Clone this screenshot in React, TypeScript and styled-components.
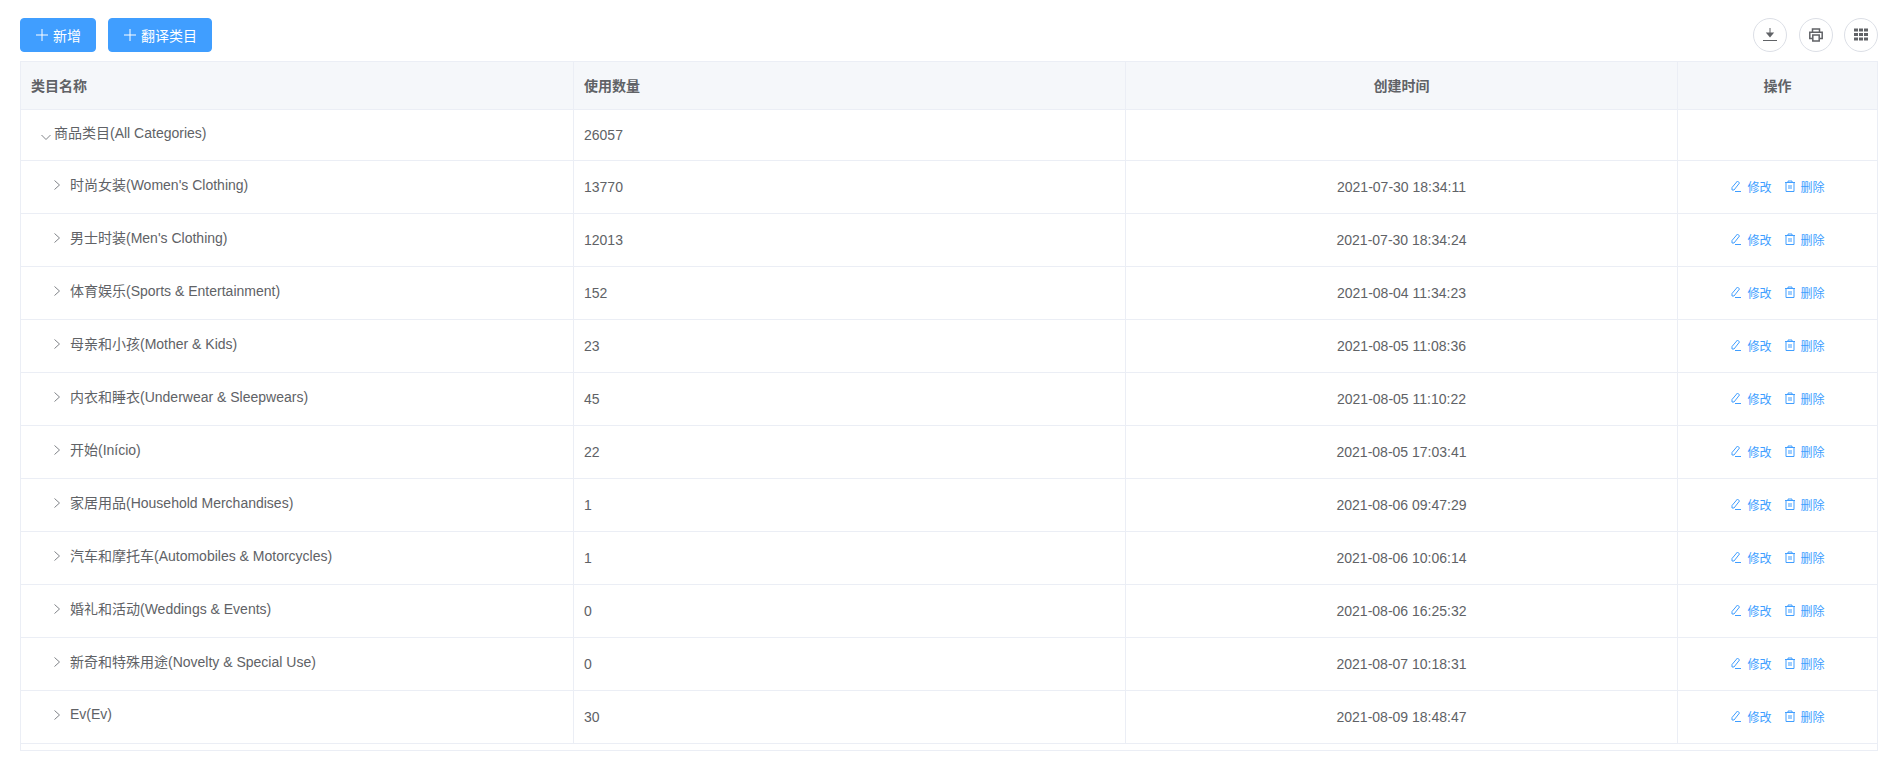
import React from "react";
import styled, { createGlobalStyle } from "styled-components";

const Global = createGlobalStyle`
  html, body { margin: 0; padding: 0; background: #fff; }
  body { font-family: "Liberation Sans", "Noto Sans CJK SC", sans-serif; color: #606266; font-size: 14px; }
`;

const Page = styled.div`
  width: 1898px;
  height: 784px;
  padding: 18px 20px 0 20px;
  box-sizing: border-box;
  overflow: hidden;
`;

const Toolbar = styled.div`
  display: flex;
  align-items: center;
  justify-content: space-between;
  height: 34px;
  margin-bottom: 9px;
`;

const Group = styled.div`
  display: flex;
  align-items: center;
`;

const PrimaryButton = styled.button<{ $w: number }>`
  display: flex;
  align-items: center;
  justify-content: center;
  gap: 4px;
  height: 34px;
  width: ${(p) => p.$w}px;
  margin-right: 12px;
  padding: 0;
  border: 1px solid #409eff;
  border-radius: 4px;
  background: #409eff;
  color: #fff;
  font: inherit;
`;

const CircleButton = styled.button<{ $ml: number }>`
  display: flex;
  align-items: center;
  justify-content: center;
  width: 34px;
  height: 34px;
  margin-left: ${(p) => p.$ml}px;
  padding: 0;
  border: 1px solid #dcdfe6;
  border-radius: 50%;
  background: #fff;
  color: #606266;
`;

const TableWrap = styled.div`
  border: 1px solid #ebeef5;
  height: 690px;
  box-sizing: border-box;
`;

const Table = styled.div`
  display: grid;
  grid-template-columns: 553px 552px 552px 1fr;
`;

const HeadCell = styled.div<{ $center?: boolean; $last?: boolean }>`
  height: 48px;
  box-sizing: border-box;
  display: flex;
  align-items: center;
  justify-content: ${(p) => (p.$center ? "center" : "flex-start")};
  padding: 0 10px 1px;
  background: #f5f7fa;
  border-right: ${(p) => (p.$last ? "0" : "1px solid #ebeef5")};
  border-bottom: 1px solid #ebeef5;
  font-size: 14px;
  font-weight: 700;
  color: #606266;
`;

const Cell = styled.div<{ $center?: boolean; $h: number; $last?: boolean }>`
  height: ${(p) => p.$h}px;
  box-sizing: border-box;
  display: flex;
  align-items: center;
  justify-content: ${(p) => (p.$center ? "center" : "flex-start")};
  padding: 0 10px;
  border-right: ${(p) => (p.$last ? "0" : "1px solid #ebeef5")};
  border-bottom: 1px solid #ebeef5;
  color: #606266;
  font-size: 14px;
`;

const NameCell = styled(Cell)<{ $root?: boolean }>`
  padding: 0 10px 6px ${(p) => (p.$root ? "18px" : "29px")};
`;

const ActionCell = styled(Cell)`
  padding: 0 10px 2px;
`;

const Arrow = styled.span<{ $root?: boolean }>`
  display: inline-flex;
  width: 14px;
  height: 14px;
  margin-right: ${(p) => (p.$root ? "1px" : "6px")};
  color: #808388;
  transform: translateY(${(p) => (p.$root ? "5px" : "1px")});
`;

const Actions = styled.div`
  display: flex;
  align-items: center;
  gap: 12px;
  color: #409eff;
  font-size: 12px;
`;

const Action = styled.span`
  display: inline-flex;
  align-items: center;
  gap: 5px;
`;

const Plus = () => (
  <svg width="14" height="14" viewBox="0 0 14 14" fill="none" stroke="#fff" strokeWidth="1">
    <path d="M7 1v12M1 7h12" />
  </svg>
);

const Right = () => (
  <svg width="14" height="14" viewBox="0 0 14 14" fill="none" stroke="currentColor" strokeWidth="1">
    <path d="M4.500 2.500L9.500 7L4.500 11.500" />
  </svg>
);

const Down = () => (
  <svg width="14" height="14" viewBox="0 0 14 14" fill="none" stroke="currentColor" strokeWidth="1">
    <path d="M2.500 5L7 9.500L11.500 5" />
  </svg>
);

const Edit = () => (
  <svg width="12" height="12" viewBox="0 0 12 12" fill="none" stroke="currentColor" strokeWidth="1">
    <path d="M7.500 1L9.500 3L4 10H2V7.500ZM5 11.500h6" />
  </svg>
);

const Trash = () => (
  <svg width="12" height="12" viewBox="0 0 12 12" fill="none" stroke="currentColor" strokeWidth="1">
    <path d="M1 2.500h10M4 2.500V1h4v1.500M2 2.500V11.500h8V2.500M5 5v4M7 5v4" />
  </svg>
);

const rows = [
  ["时尚女装(Women's Clothing)", "13770", "2021-07-30 18:34:11"],
  ["男士时装(Men's Clothing)", "12013", "2021-07-30 18:34:24"],
  ["体育娱乐(Sports & Entertainment)", "152", "2021-08-04 11:34:23"],
  ["母亲和小孩(Mother & Kids)", "23", "2021-08-05 11:08:36"],
  ["内衣和睡衣(Underwear & Sleepwears)", "45", "2021-08-05 11:10:22"],
  ["开始(Início)", "22", "2021-08-05 17:03:41"],
  ["家居用品(Household Merchandises)", "1", "2021-08-06 09:47:29"],
  ["汽车和摩托车(Automobiles & Motorcycles)", "1", "2021-08-06 10:06:14"],
  ["婚礼和活动(Weddings & Events)", "0", "2021-08-06 16:25:32"],
  ["新奇和特殊用途(Novelty & Special Use)", "0", "2021-08-07 10:18:31"],
  ["Ev(Ev)", "30", "2021-08-09 18:48:47"],
];

export default function App() {
  return (
    <Page>
      <Global />
      <Toolbar>
        <Group>
          <PrimaryButton $w={76}><Plus />新增</PrimaryButton>
          <PrimaryButton $w={104}><Plus />翻译类目</PrimaryButton>
        </Group>
        <Group>
          <CircleButton $ml={0}>
            <svg width="14" height="14" viewBox="0 0 14 14" fill="none" stroke="currentColor">
              <path d="M7 0v6" strokeWidth="1" />
              <path d="M2.800 4.500h8.400L7 9.500Z" fill="currentColor" stroke="none" />
              <path d="M0 12.500h14" strokeWidth="1" />
            </svg>
          </CircleButton>
          <CircleButton $ml={12}>
            <svg width="14" height="14" viewBox="0 0 14 14" fill="none" stroke="currentColor" strokeWidth="1.5">
              <path d="M3.500 4V1h7v3M3 10.500H.8V4.200h12.400v6.300H11" />
              <rect x="3.800" y="7" width="6.400" height="6" />
            </svg>
          </CircleButton>
          <CircleButton $ml={11}>
            <svg width="14" height="14" viewBox="0 0 14 14" fill="currentColor">
              <rect x="0" y="0.500" width="4" height="3" /><rect x="5" y="0.500" width="4" height="3" /><rect x="10" y="0.500" width="4" height="3" />
              <rect x="0" y="5" width="4" height="3" /><rect x="5" y="5" width="4" height="3" /><rect x="10" y="5" width="4" height="3" />
              <rect x="0" y="9.500" width="4" height="3" /><rect x="5" y="9.500" width="4" height="3" /><rect x="10" y="9.500" width="4" height="3" />
            </svg>
          </CircleButton>
        </Group>
      </Toolbar>
      <TableWrap>
        <Table>
          <HeadCell>类目名称</HeadCell>
          <HeadCell>使用数量</HeadCell>
          <HeadCell $center>创建时间</HeadCell>
          <HeadCell $center $last>操作</HeadCell>

          <NameCell $h={51} $root><Arrow $root><Down /></Arrow>商品类目(All Categories)</NameCell>
          <Cell $h={51}>26057</Cell>
          <Cell $h={51} $center />
          <Cell $h={51} $center $last />

          {rows.map((r) => (
            <React.Fragment key={r[0]}>
              <NameCell $h={53}><Arrow><Right /></Arrow>{r[0]}</NameCell>
              <Cell $h={53}>{r[1]}</Cell>
              <Cell $h={53} $center>{r[2]}</Cell>
              <ActionCell $h={53} $center $last>
                <Actions>
                  <Action><Edit />修改</Action>
                  <Action><Trash />删除</Action>
                </Actions>
              </ActionCell>
            </React.Fragment>
          ))}
        </Table>
      </TableWrap>
    </Page>
  );
}
